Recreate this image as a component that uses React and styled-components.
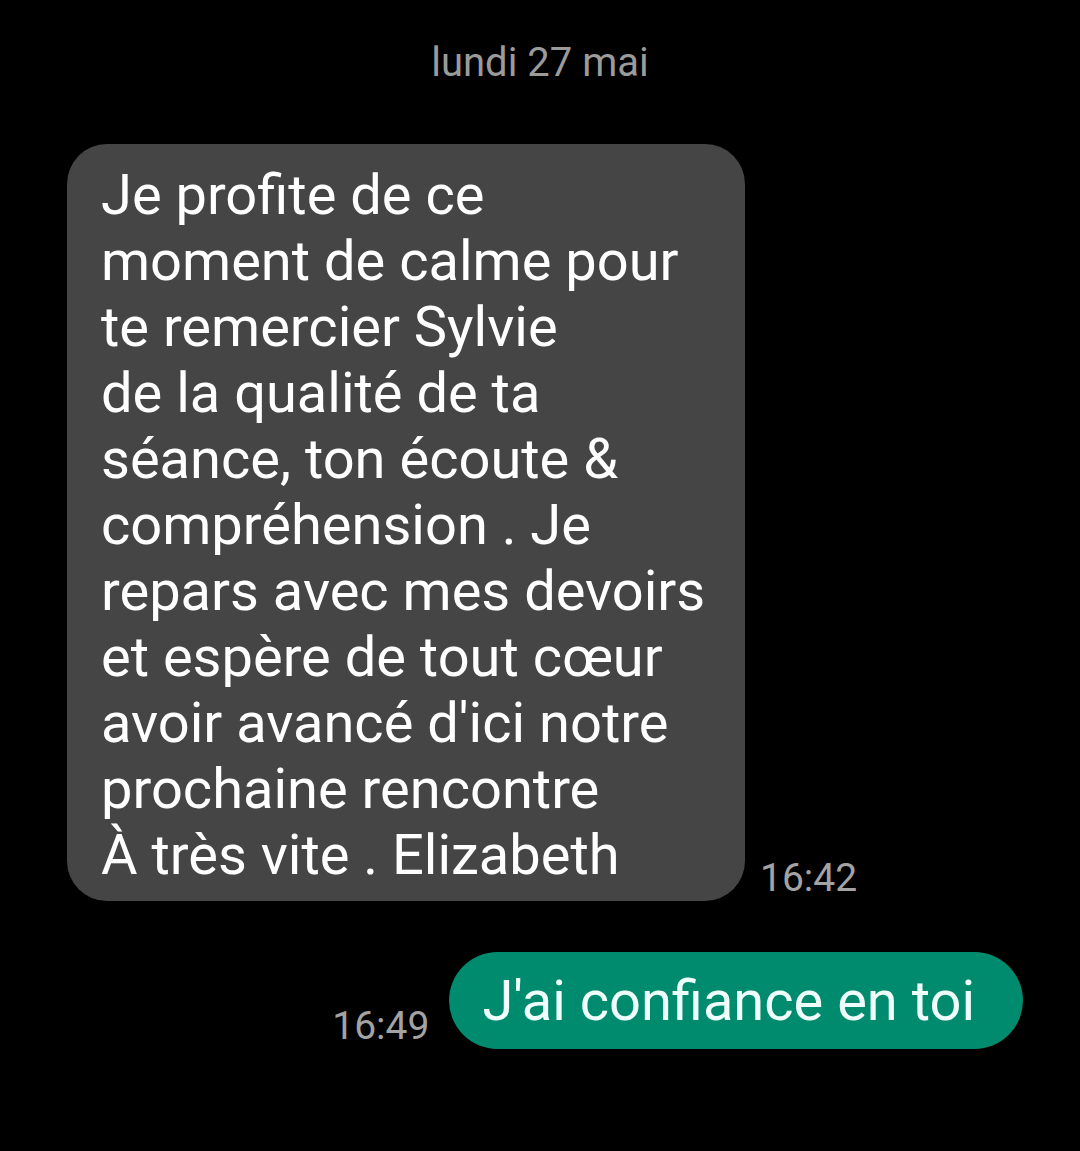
import React from 'react'
import styled, { createGlobalStyle } from 'styled-components'

const Global = createGlobalStyle`
  html, body {
    margin: 0;
    padding: 0;
    background: #000;
  }
  body {
    font-family: Roboto, "Noto Sans", sans-serif;
    -webkit-font-smoothing: antialiased;
  }
`

const Screen = styled.div`
  width: 1080px;
  height: 1151px;
  background: #000;
  display: flex;
  flex-direction: column;
  box-sizing: border-box;
  padding-top: 40px;
`

const DateLabel = styled.div`
  text-align: center;
  color: #9b9b9b;
  font-size: 40px;
  line-height: 46px;
`

const Row = styled.div`
  display: flex;
  align-items: flex-end;
  justify-content: ${p => (p.$mine ? 'flex-end' : 'flex-start')};
  gap: ${p => (p.$mine ? '20px' : '15px')};
  padding: ${p => (p.$mine ? '0 57px 0 0' : '0 0 0 67px')};
  margin-top: ${p => p.$top}px;
`

const Bubble = styled.div`
  background: #454545;
  color: #fff;
  width: 678px;
  box-sizing: border-box;
  border-radius: 40px;
  padding: 18px 20px 13px 34px;
  font-size: 56px;
  line-height: 66px;
`

const Line = styled.div`
  white-space: nowrap;
`

const SentBubble = styled.div`
  background: #008b6f;
  color: #effffa;
  height: 97px;
  box-sizing: border-box;
  border-radius: 49px;
  padding: 0 48px 0 33px;
  display: flex;
  align-items: center;
  font-size: 56px;
  white-space: nowrap;
`

const Time = styled.div`
  color: #a3a3a3;
  font-size: 39px;
  line-height: 39px;
  padding-bottom: ${p => p.$pb}px;
`

const lines = [
  'Je profite de ce',
  'moment de calme pour',
  'te remercier Sylvie',
  'de la qualité de ta',
  'séance, ton écoute &',
  'compréhension . Je',
  'repars avec mes devoirs',
  'et espère de tout cœur',
  "avoir avancé d'ici notre",
  'prochaine rencontre',
  'À très vite . Elizabeth',
]

export default function App() {
  return (
    <Screen>
      <Global />
      <DateLabel>lundi 27 mai</DateLabel>
      <Row $top={58}>
        <Bubble>
          {lines.map((l, i) => (
            <Line key={i}>{l}</Line>
          ))}
        </Bubble>
        <Time $pb={3}>16:42</Time>
      </Row>
      <Row $mine $top={51}>
        <Time $pb={3}>16:49</Time>
        <SentBubble>J'ai confiance en toi</SentBubble>
      </Row>
    </Screen>
  )
}
